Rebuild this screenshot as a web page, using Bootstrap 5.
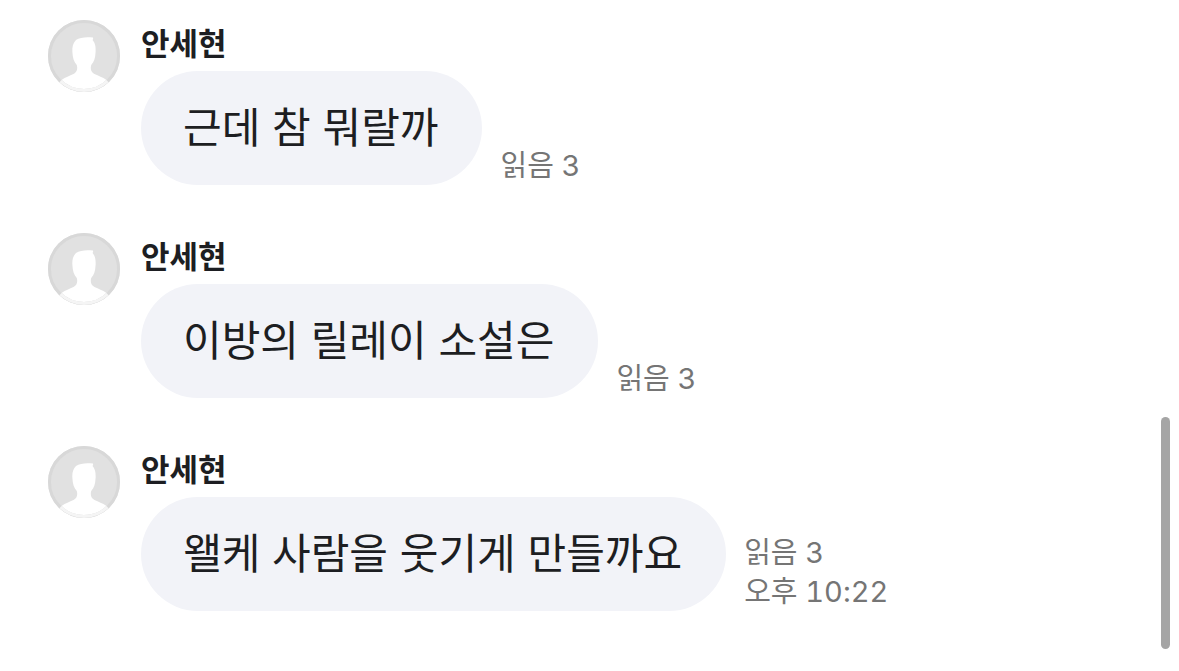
<!DOCTYPE html>
<html lang="ko">
<head>
<meta charset="utf-8">
<meta name="viewport" content="width=device-width, initial-scale=1">
<title>채팅</title>
<link href="https://cdn.jsdelivr.net/npm/bootstrap@5.3.0/dist/css/bootstrap.min.css" rel="stylesheet">
<style>
body{font-family:Inter,"Noto Sans CJK KR",sans-serif;color:#1d1e22;background:#fff}
.chat-list{padding:20px 48px 60px;gap:48px}
.message{gap:21px}
.avatar{width:72px;height:72px}
.sender{font-size:31px;line-height:48px;font-weight:700;height:51px}
.bubble-row{gap:18px}
.bubble{background:#f2f3f8;border-radius:57px;padding:25px 44px 25px 42px;font-size:42px;line-height:64px}
.meta{font-size:29px;line-height:39px;color:#757575;font-variant-numeric:tabular-nums}
.scroll-thumb{right:9px;bottom:22px;width:9px;height:232px;background:#a5a5a5}
</style>
</head>
<body class="overflow-hidden">
<svg class="d-none" aria-hidden="true"><symbol id="person" viewBox="0 0 72 72"><circle cx="36" cy="36" r="36" fill="#e1e1e1"/><path d="M45 17.5c-6-.7-13-.5-17 2.5-3 3-4 7-3.6 12 .3 6 1.6 10 4.4 13 1 4 .3 7-3.3 9-4 2-8 3-12 6C20 67 28 71 36 71s16-4 22.500-11c-4-3-8-4-12-6-3.600-2-4.300-5-3.300-9 2.800-3 4.100-7 4.400-13 .3-6-.6-9-3-12 .4-.8.800-1.500.4-2.500z" fill="#fff"/><circle cx="36" cy="36" r="34.500" fill="none" stroke="#d8d8d8" stroke-width="3"/><path d="M12.500 61.200a34.500 34.500 0 0 0 47 0" fill="none" stroke="#f5f5f5" stroke-width="3"/></symbol></svg>
<main class="chat-list d-flex flex-column">
<article class="message d-flex align-items-start"><svg class="avatar flex-shrink-0" aria-hidden="true"><use href="#person"/></svg><div><div class="sender">안세현</div><div class="bubble-row d-flex align-items-end"><div class="bubble">근데 참 뭐랄까</div><div class="meta">읽음 3</div></div></div></article>
<article class="message d-flex align-items-start"><svg class="avatar flex-shrink-0" aria-hidden="true"><use href="#person"/></svg><div><div class="sender">안세현</div><div class="bubble-row d-flex align-items-end"><div class="bubble">이방의 릴레이 소설은</div><div class="meta">읽음 3</div></div></div></article>
<article class="message d-flex align-items-start"><svg class="avatar flex-shrink-0" aria-hidden="true"><use href="#person"/></svg><div><div class="sender">안세현</div><div class="bubble-row d-flex align-items-end"><div class="bubble">왤케 사람을 웃기게 만들까요</div><div class="meta">읽음 3<br>오후 10:22</div></div></div></article>
</main>
<div class="scroll-thumb position-fixed rounded-pill"></div>
<script src="https://cdn.jsdelivr.net/npm/bootstrap@5.3.0/dist/js/bootstrap.bundle.min.js"></script>
</body>
</html>
